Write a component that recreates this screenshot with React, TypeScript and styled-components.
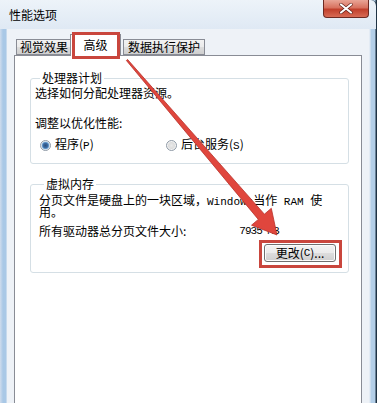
import React from "react";
import styled, { createGlobalStyle } from "styled-components";

const Global = createGlobalStyle`
  html, body { margin: 0; padding: 0; background: #ffffff; }
  body { width: 377px; height: 403px; overflow: hidden; }
  #root { width: 377px; height: 403px; }
`;

const FONT = `"Noto Sans CJK SC", "Noto Sans", sans-serif`;
const MONO = `"Liberation Mono", "DejaVu Sans Mono", monospace`;

const Window = styled.div`
  position: relative;
  width: 377px;
  height: 403px;
  box-sizing: border-box;
  display: flex;
  flex-direction: column;
  background: linear-gradient(90deg, #cfdced 0px, #a9c8e6 3px, #a9c8e6 6px, #e3ebf4 7px, #e3ebf4 370px, #b4cfe8 371px, #b4cfe8 375px, #1f3344 376px);
  font-family: ${FONT};
  font-size: 12px;
  color: #000;
  overflow: hidden;
`;

const TitleBar = styled.div`
  height: 29px;
  flex: none;
  display: flex;
  justify-content: space-between;
  align-items: flex-start;
  background: linear-gradient(180deg, #edf3f9 0%, #dfe9f4 100%);
  border-right: 1px solid #1f3344;
  border-top-right-radius: 6px;
`;

const Title = styled.div`
  margin: 8px 0 0 9px;
  font-size: 12px;
  line-height: 14px;
  color: #000;
`;

const CloseButton = styled.div`
  width: 46px;
  height: 18px;
  margin-right: 7px;
  box-sizing: border-box;
  border: 1px solid #6d2a22;
  border-top: none;
  border-radius: 0 0 4px 4px;
  background: linear-gradient(180deg, #e9a596 0%, #d8725f 45%, #c1402c 55%, #d86b55 100%);
  display: flex;
  align-items: center;
  justify-content: center;
`;

const Client = styled.div`
  flex: 1;
  margin: 0 8px 0 7px;
  background: #eef2f7;
  padding: 0 7px;
  display: flex;
  flex-direction: column;
`;

const TabRow = styled.div`
  height: 27px;
  flex: none;
  display: flex;
  align-items: flex-end;
  padding-left: 2px;
  position: relative;
  z-index: 1;
  margin-bottom: -1px;
`;

const Tab = styled.div<{ $active?: boolean; $w: number }>`
  width: ${(p) => p.$w}px;
  box-sizing: border-box;
  height: ${(p) => (p.$active ? 22 : 16)}px;
  margin: ${(p) => (p.$active ? "0 2px 0 -2px" : "0 0 1px 0")};
  border: 1px solid #898c95;
  border-bottom: ${(p) => (p.$active ? "none" : "1px solid #898c95")};
  background: ${(p) => (p.$active ? "#ffffff" : "linear-gradient(180deg, #f2f2f2 0%, #ebebeb 50%, #dddddd 51%, #cfcfcf 100%)")};
  display: flex;
  align-items: ${(p) => (p.$active ? "flex-start" : "center")};
  justify-content: center;
  padding-top: ${(p) => (p.$active ? "3px" : "0")};
  font-size: 12px;
  line-height: 14px;
  position: relative;
  z-index: ${(p) => (p.$active ? 2 : 1)};
`;

const Panel = styled.div`
  flex: 1;
  background: #ffffff;
  border: 1px solid #898c95;
  border-bottom: none;
  padding: 15px 12px 0 15px;
  display: flex;
  flex-direction: column;
  gap: 13px;
`;

const Group = styled.fieldset<{ $pb: number; $pl: number }>`
  margin: 0;
  padding: 0 12px ${(p) => p.$pb}px ${(p) => p.$pl}px;
  border: 1px solid #d5dfe5;
  border-radius: 3px;
  min-width: 0;
`;

const Legend = styled.legend`
  padding: 0 2px;
  margin-left: 5px;
  font-size: 12px;
  line-height: 14px;
  color: #000;
`;

const Line = styled.div<{ $mt: number; $lh?: number }>`
  margin-top: ${(p) => p.$mt}px;
  line-height: ${(p) => p.$lh ?? 14}px;
  height: ${(p) => p.$lh ?? 14}px;
  font-size: 12px;
  white-space: nowrap;
`;

const Ascii = styled.span`
  font-family: ${MONO};
  font-size: 11px;
  white-space: pre;
`;

const RadioRow = styled.div`
  margin-top: 8px;
  display: flex;
  align-items: center;
  height: 14px;
`;

const RadioItem = styled.label<{ $w?: number; $ml?: number }>`
  display: flex;
  align-items: center;
  gap: 4px;
  width: ${(p) => (p.$w ? `${p.$w}px` : "auto")};
  margin-left: ${(p) => p.$ml ?? 0}px;
  line-height: 14px;
`;

const RadioDot = styled.span<{ $checked?: boolean }>`
  width: 11px;
  height: 11px;
  box-sizing: border-box;
  border-radius: 50%;
  border: 1px solid #8f9aa6;
  background: ${(p) =>
    p.$checked
      ? "radial-gradient(circle at 50% 50%, #2d4e78 0, #3d6fa8 2.5px, #7fb0db 3.5px, #e9eef3 4.2px, #f4f4f4 100%)"
      : "radial-gradient(circle at 50% 50%, #eaeaea 0, #dcdcdc 3px, #f2f2f2 4px, #fafafa 100%)"};
  flex: none;
`;

const ValueRow = styled.div`
  margin-top: 6px;
  display: flex;
  line-height: 14px;
  white-space: nowrap;
`;

const Value = styled.span`
  margin-left: 53px;
  font-family: ${MONO};
  font-size: 11px;
  letter-spacing: -1px;
  white-space: pre;
`;

const ButtonRow = styled.div`
  margin-top: 6px;
  display: flex;
  justify-content: flex-end;
`;

const Button = styled.div`
  width: 72px;
  height: 18px;
  box-sizing: border-box;
  border: 1px solid #707070;
  border-radius: 3px;
  background: linear-gradient(180deg, #f2f2f2 0%, #ebebeb 50%, #dddddd 51%, #cfcfcf 100%);
  box-shadow: inset 0 0 0 1px #fcfcfc;
  display: flex;
  align-items: center;
  justify-content: center;
  line-height: 14px;
  font-size: 12px;
`;

const Mark = styled.div<{ $x: number; $y: number; $w: number; $h: number }>`
  position: absolute;
  left: ${(p) => p.$x}px;
  top: ${(p) => p.$y}px;
  width: ${(p) => p.$w}px;
  height: ${(p) => p.$h}px;
  box-sizing: border-box;
  border: 3px solid #c9463d;
  pointer-events: none;
  z-index: 5;
`;

const ArrowLayer = styled.svg`
  position: absolute;
  left: 0;
  top: 0;
  width: 377px;
  height: 403px;
  pointer-events: none;
  z-index: 6;
`;

function Arrow() {
  const sx = 127, sy = 60, tx = 277, ty = 235;
  const dx = tx - sx, dy = ty - sy;
  const len = Math.hypot(dx, dy);
  const ux = dx / len, uy = dy / len;
  const nx = -uy, ny = ux;
  const headLen = 24, headHalf = 13;
  const bx = tx - ux * headLen, by = ty - uy * headLen;
  const w0 = 0.8, w1 = 4;
  const pts = [
    [sx + nx * w0, sy + ny * w0],
    [bx + nx * w1, by + ny * w1],
    [bx + nx * headHalf, by + ny * headHalf],
    [tx, ty],
    [bx - nx * headHalf, by - ny * headHalf],
    [bx - nx * w1, by - ny * w1],
    [sx - nx * w0, sy - ny * w0],
  ]
    .map((p) => p.map((v) => v.toFixed(1)).join(","))
    .join(" ");
  return (
    <ArrowLayer viewBox="0 0 377 403">
      <polygon points={pts} fill="#e0463d" stroke="#b8322b" strokeWidth="0.8" strokeLinejoin="round" />
    </ArrowLayer>
  );
}

export default function App() {
  return (
    <>
      <Global />
      <Window>
        <TitleBar>
          <Title>性能选项</Title>
          <CloseButton>
            <svg width="14" height="11" viewBox="0 0 14 11">
              <path d="M2 1.5 L12 9.5 M12 1.5 L2 9.5" stroke="#5a1a12" strokeWidth="3.4" strokeLinecap="round" />
              <path d="M2 1.5 L12 9.5 M12 1.5 L2 9.5" stroke="#ffffff" strokeWidth="2.2" strokeLinecap="round" />
            </svg>
          </CloseButton>
        </TitleBar>
        <Client>
          <TabRow>
            <Tab $w={56}>视觉效果</Tab>
            <Tab $w={51} $active>高级</Tab>
            <Tab $w={82}>数据执行保护</Tab>
          </TabRow>
          <Panel>
            <Group $pb={11} $pl={4}>
              <Legend>处理器计划</Legend>
              <Line $mt={1}>选择如何分配处理器资源。</Line>
              <Line $mt={16}>调整以优化性能:</Line>
              <RadioRow>
                <RadioItem $w={126} $ml={5}>
                  <RadioDot $checked />
                  <span>程序(<Ascii>P</Ascii>)</span>
                </RadioItem>
                <RadioItem>
                  <RadioDot />
                  <span>后台服务(<Ascii>S</Ascii>)</span>
                </RadioItem>
              </RadioRow>
            </Group>
            <Group $pb={10} $pl={8}>
              <Legend>虚拟内存</Legend>
              <Line $mt={3} $lh={12}>
                分页文件是硬盘上的一块区域，<Ascii>Windows</Ascii>当作<Ascii> RAM </Ascii>使
              </Line>
              <Line $mt={0} $lh={12}>用。</Line>
              <ValueRow>
                <span>所有驱动器总分页文件大小:</span>
                <Value>7935 MB</Value>
              </ValueRow>
              <ButtonRow>
                <Button>更改(<Ascii>C</Ascii>)...</Button>
              </ButtonRow>
            </Group>
          </Panel>
        </Client>
        <Mark $x={72} $y={32} $w={48} $h={27} />
        <Mark $x={259} $y={240} $w={83} $h={28} />
        <Arrow />
      </Window>
    </>
  );
}
